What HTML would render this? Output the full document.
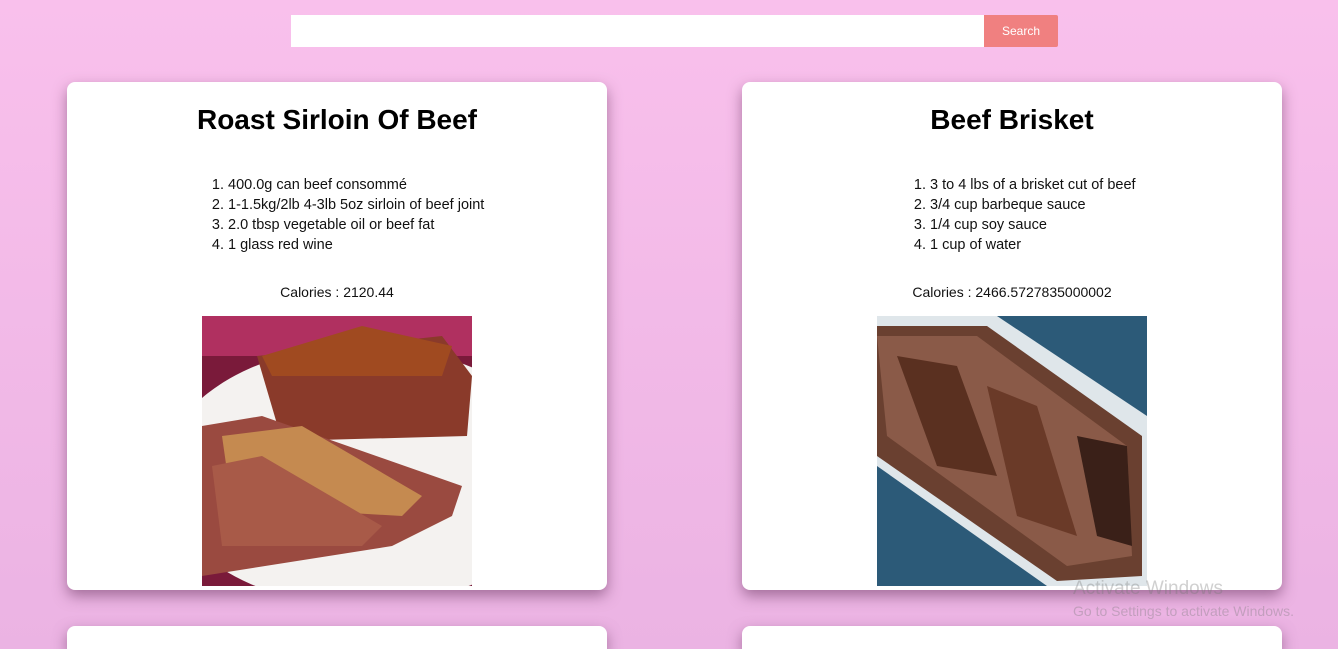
<!DOCTYPE html>
<html><head><meta charset="utf-8"><style>
html,body{margin:0;padding:0;height:649px;overflow:hidden}
body{width:1338px;background:linear-gradient(180deg,#f9c0ec 0%,#ebb3e3 100%);font-family:"Liberation Sans",sans-serif;position:relative}
.search{position:absolute;left:291px;top:15px;width:693px;height:32px;background:#fff}
.btn{position:absolute;left:984px;top:15px;width:74px;height:32px;background:#f08080;color:#fff;font-size:12px;line-height:32px;text-align:center;border-radius:0 2px 2px 0}
.card{position:absolute;width:540px;background:#fff;border-radius:8px;box-shadow:0 6px 14px rgba(90,40,80,.5)}
.card h1{position:absolute;left:0;right:0;margin:0;text-align:center;font-size:28px;font-weight:bold;color:#000}
.card ol{position:absolute;margin:0;padding:0 0 0 26px;font-size:14.5px;line-height:20px;color:#111}
.cal{position:absolute;left:0;right:0;text-align:center;font-size:14px;color:#111}
.img{position:absolute;width:270px;height:270px;overflow:hidden}
.wm{position:absolute;color:rgba(120,120,120,.35);font-size:14px}
</style></head><body>
<div class="search"></div><div class="btn">Search</div>

<div class="card" style="left:67px;top:82px;height:508px">
<h1 style="top:22px">Roast Sirloin Of Beef</h1>
<ol style="left:135px;top:93px"><li>400.0g can beef consommé</li><li>1-1.5kg/2lb 4-3lb 5oz sirloin of beef joint</li><li>2.0 tbsp vegetable oil or beef fat</li><li>1 glass red wine</li></ol>
<div class="cal" style="top:202px">Calories : 2120.44</div>
<div class="img" style="left:135px;top:234px">
<svg width="270" height="270"><rect width="270" height="270" fill="#7a1a3a"/><rect width="270" height="40" fill="#b03060"/>
<ellipse cx="160" cy="160" rx="200" ry="130" fill="#f4f2f0"/>
<path d="M55 40 L240 20 L270 60 L265 120 L80 125 Z" fill="#8a3a2a"/>
<path d="M60 40 L160 10 L250 30 L240 60 L70 60 Z" fill="#a04a20"/>
<path d="M0 110 L60 100 L260 170 L250 200 L190 230 L0 260 Z" fill="#9a4a40"/>
<path d="M20 120 L100 110 L220 180 L200 200 L30 190 Z" fill="#c58a50"/>
<path d="M10 150 L60 140 L180 210 L160 230 L20 230 Z" fill="#a85a48"/>
</svg></div>
</div>

<div class="card" style="left:742px;top:82px;height:508px">
<h1 style="top:22px">Beef Brisket</h1>
<ol style="left:162px;top:93px"><li>3 to 4 lbs of a brisket cut of beef</li><li>3/4 cup barbeque sauce</li><li>1/4 cup soy sauce</li><li>1 cup of water</li></ol>
<div class="cal" style="top:202px">Calories : 2466.5727835000002</div>
<div class="img" style="left:135px;top:234px">
<svg width="270" height="270"><rect width="270" height="270" fill="#2c5a78"/>
<path d="M0 0 L120 0 L270 100 L270 270 L170 270 L0 150 Z" fill="#dfe6ea"/>
<path d="M0 10 L110 10 L265 120 L265 260 L180 265 L0 140 Z" fill="#6a4030"/>
<path d="M0 20 L100 20 L250 130 L255 240 L190 250 L10 120 Z" fill="#8a5a48"/>
<path d="M20 40 L80 50 L120 160 L60 150 Z" fill="#5a3020"/>
<path d="M110 70 L160 90 L200 220 L140 200 Z" fill="#6a3a28"/>
<path d="M200 120 L250 130 L255 230 L220 220 Z" fill="#3a2018"/>
</svg></div>
</div>

<div class="card" style="left:67px;top:626px;height:23px;border-radius:8px 8px 0 0"></div>
<div class="card" style="left:742px;top:626px;height:23px;border-radius:8px 8px 0 0"></div>
<div class="wm" style="left:1073px;top:578px;font-size:19px">Activate Windows</div>
<div class="wm" style="left:1073px;top:603px">Go to Settings to activate Windows.</div>
</body></html>
